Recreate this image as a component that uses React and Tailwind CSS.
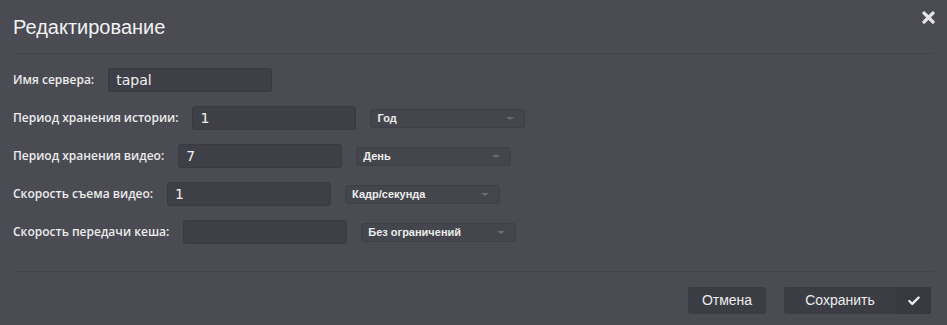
import { Check } from "lucide-react";

const rows = [
  { label: "Имя сервера:", value: "tapal" },
  { label: "Период хранения истории:", value: "1", unit: "Год" },
  { label: "Период хранения видео:", value: "7", unit: "День" },
  { label: "Скорость съема видео:", value: "1", unit: "Кадр/секунда" },
  { label: "Скорость передачи кеша:", value: "", unit: "Без ограничений" },
];

function Select({ text }) {
  return (
    <div className="ml-[14px] flex h-[19px] w-[155px] items-center justify-between rounded-[3px] border border-[#3f4047] bg-[#45464d] pl-[6px] pr-[10px] text-[11px] font-bold text-[#ececec]">
      <span>{text}</span>
      <span className="h-0 w-0 border-x-[4px] border-t-[3px] border-x-transparent border-t-[#6b6c73]" />
    </div>
  );
}

export default function App() {
  return (
    <div
      className="relative h-[325px] w-[947px] bg-[#4a4b53] text-[#ececec]"
      style={{ fontFamily: "'Liberation Sans', Arial, sans-serif" }}
    >
      {/* header */}
      <div className="mx-[13px] border-b border-[#44454c] pt-[14px] pb-[13px]">
        <h1 className="text-[20px] leading-[26px] text-[#f2f2f2]">Редактирование</h1>
      </div>
      <svg
        className="absolute right-[12px] top-[11px]"
        width="13"
        height="13"
        viewBox="0 0 13 13"
      >
        <path d="M2 2 L11 11 M11 2 L2 11" stroke="#e4e4e6" strokeWidth="3.2" strokeLinecap="round" />
      </svg>

      {/* form */}
      <div className="flex flex-col gap-[14px] px-[13px] pt-[14px]">
        {rows.map((r, i) => (
          <div key={i} className="flex h-[24px] items-center">
            <span className="text-[12px] font-semibold text-[#ececec]" style={{ fontFamily: "'Open Sans', sans-serif" }}>
              {r.label}
            </span>
            <div className="ml-[14px] flex h-[24px] w-[164px] items-center rounded-[3px] border border-[#3a3b41] bg-[#3f4047] px-[7px] text-[14px] text-[#f0f0f0]" style={{ fontFamily: "'DejaVu Sans', sans-serif" }}>
              {r.value}
            </div>
            {r.unit && <Select text={r.unit} />}
          </div>
        ))}
      </div>

      {/* footer */}
      <div className="mx-[13px] mt-[27px] border-t border-[#44454c]" />
      <div className="flex justify-end gap-[18px] pr-[16px] pt-[15px]">
        <button className="h-[27px] w-[78px] rounded-[3px] bg-[#3c3d44] text-[14px] text-[#ececec]">
          Отмена
        </button>
        <button className="flex h-[27px] w-[147px] overflow-hidden rounded-[3px] bg-[#3c3d44] text-[14px] text-[#ececec]">
          <span className="flex flex-1 items-center justify-center">Сохранить</span>
          <span className="flex w-[35px] items-center justify-center bg-[#393a40]">
            <Check size={14} strokeWidth={4} color="#ececec" />
          </span>
        </button>
      </div>
    </div>
  );
}
